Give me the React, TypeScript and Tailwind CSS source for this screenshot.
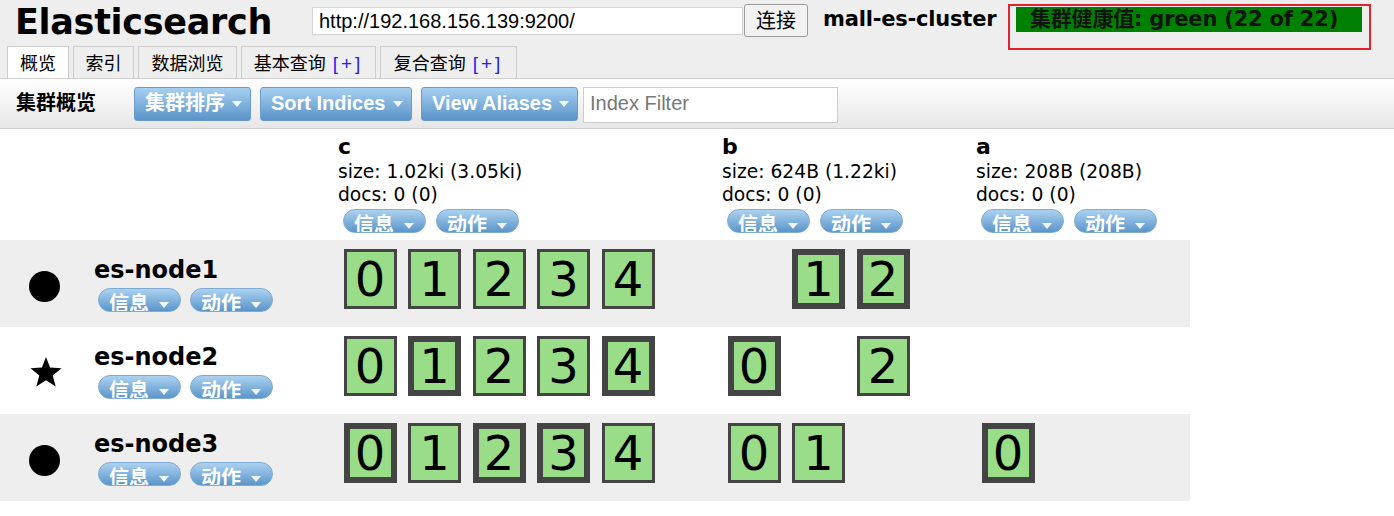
import React from "react";

const VERDANA = "font-['DejaVu_Sans','Noto_Sans_CJK_SC',sans-serif]";
const ARIAL = "font-['Liberation_Sans','Noto_Sans_CJK_SC',sans-serif]";

type Slot = null | { n: number; p: boolean };

const nodes: { name: string; master: boolean; c: Slot[]; b: Slot[]; a: Slot[] }[] = [
  {
    name: "es-node1",
    master: false,
    c: [
      { n: 0, p: false },
      { n: 1, p: false },
      { n: 2, p: false },
      { n: 3, p: false },
      { n: 4, p: false },
    ],
    b: [null, { n: 1, p: true }, { n: 2, p: true }],
    a: [],
  },
  {
    name: "es-node2",
    master: true,
    c: [
      { n: 0, p: false },
      { n: 1, p: true },
      { n: 2, p: false },
      { n: 3, p: false },
      { n: 4, p: true },
    ],
    b: [{ n: 0, p: true }, null, { n: 2, p: false }],
    a: [],
  },
  {
    name: "es-node3",
    master: false,
    c: [
      { n: 0, p: true },
      { n: 1, p: false },
      { n: 2, p: true },
      { n: 3, p: true },
      { n: 4, p: false },
    ],
    b: [{ n: 0, p: false }, { n: 1, p: false }],
    a: [{ n: 0, p: true }],
  },
];

const indices = [
  { name: "c", size: "size: 1.02ki (3.05ki)", docs: "docs: 0 (0)" },
  { name: "b", size: "size: 624B (1.22ki)", docs: "docs: 0 (0)" },
  { name: "a", size: "size: 208B (208B)", docs: "docs: 0 (0)" },
];

function Caret() {
  return (
    <svg width="10" height="6" viewBox="0 0 10 6" className="shrink-0">
      <path d="M0 0h10L5 6z" fill="#fff" fillOpacity="0.9" />
    </svg>
  );
}

function ToolButton({ label, width }: { label: string; width: string }) {
  return (
    <div
      className={`${width} h-[34px] flex items-center justify-between pl-[10px] pr-[8px] rounded-[3px] border border-[#6a9bcf] bg-linear-to-b from-[#a6d0f1] to-[#5a93c8] text-white font-bold text-[20px] ${ARIAL}`}
    >
      <span className="-mt-[2px]">{label}</span>
      <Caret />
    </div>
  );
}

function Pill({ label }: { label: string }) {
  return (
    <div className="w-[83px] h-[24px] rounded-full overflow-hidden border border-[#7eaad4] bg-linear-to-b from-[#acd2f1] to-[#5b95c9] flex items-start pl-[10px] pt-[5px]">
      <span className={`text-white font-bold text-[20px] leading-[20px] ${ARIAL}`}>{label}</span>
      <span className="ml-[10px] mt-[8px]">
        <Caret />
      </span>
    </div>
  );
}

function Shard({ s }: { s: Slot }) {
  return (
    <div className="w-[64.5px] shrink-0 pl-[5.5px]">
      {s && (
        <div
          className={`w-[53px] h-[60px] flex items-center justify-center bg-[#99dd88] border-[#444444] ${
            s.p ? "border-[6px]" : "border-[3px]"
          } text-[48px] leading-none text-black font-['DejaVu_Sans',sans-serif]`}
        >
          {s.n}
        </div>
      )}
    </div>
  );
}

function Star() {
  return (
    <svg width="34" height="32" viewBox="0 0 34 32">
      <path
        d="M17 1l4.1 10.6 11.4.6-8.8 7.2 3 11L17 24.2 7.3 30.4l3-11-8.8-7.2 11.4-.6z"
        fill="#000"
      />
    </svg>
  );
}

export default function App() {
  return (
    <div className={`w-[1394px] h-[516px] overflow-hidden bg-white text-black ${VERDANA}`}>
      {/* header */}
      <div className="bg-[#eeeeee] h-[78px]">
        <div className="flex items-start h-[46px]">
          <div className="w-[312px] pl-[15px] pt-[2px] text-[35px] leading-[40px] font-bold tracking-[-0.3px]">
            Elasticsearch
          </div>
          <div
            className={`mt-[7px] w-[431px] h-[28px] bg-white border border-[#d4d4d4] pl-[6px] text-[20px] leading-[26px] ${ARIAL}`}
          >
            http://192.168.156.139:9200/
          </div>
          <div
            className={`mt-[4px] ml-[1px] w-[64px] h-[33px] rounded-[3px] border border-[#9a9a9a] bg-[#f2f2f2] flex items-center justify-center text-[20px] ${ARIAL}`}
          >
            连接
          </div>
          <div className="ml-[15px] w-[185px] pt-[6px] text-[21px] leading-[26px] font-bold tracking-[-0.2px]">
            mall-es-cluster
          </div>
          <div className="mt-[4px] w-[363px] h-[46px] border-2 border-[#e3222e] pt-[1px] pl-[6px]">
            <div className="w-[346px] h-[25px] bg-[#008000] pl-[14px] text-[21px] leading-[25px] font-bold text-[#101410] tracking-[-0.2px]">
              集群健康值: green (22 of 22)
            </div>
          </div>
        </div>
        <div className={`flex items-end gap-[4px] pl-[7px] h-[32px] text-[18px] ${ARIAL}`}>
          <div className="w-[62px] h-[32px] bg-white border border-b-0 border-[#cccccc] flex items-center justify-center pt-[4px]">
            概览
          </div>
          <div className="w-[61px] h-[32px] border border-b-0 border-[#cccccc] flex items-center justify-center pt-[4px]">
            索引
          </div>
          <div className="w-[99px] h-[32px] border border-b-0 border-[#cccccc] flex items-center justify-center pt-[4px]">
            数据浏览
          </div>
          <div className="w-[135px] h-[32px] border border-b-0 border-[#cccccc] flex items-center justify-center pt-[4px]">
            基本查询&nbsp;<span className="text-[#2222f0] text-[19px] tracking-[3px] ml-[2px]">[+]</span>
          </div>
          <div className="w-[137px] h-[32px] border border-b-0 border-[#cccccc] flex items-center justify-center pt-[4px]">
            复合查询&nbsp;<span className="text-[#2222f0] text-[19px] tracking-[3px] ml-[2px]">[+]</span>
          </div>
        </div>
      </div>

      {/* toolbar */}
      <div className="h-[51px] border-y border-[#cfcfcf] bg-linear-to-b from-[#ffffff] to-[#e7e7e7] flex items-center">
        <div className="w-[134px] pl-[16px] text-[20px] font-bold -mt-[2px]">集群概览</div>
        <ToolButton label="集群排序" width="w-[117px]" />
        <div className="w-[9px]" />
        <ToolButton label="Sort Indices" width="w-[152px]" />
        <div className="w-[9px]" />
        <ToolButton label="View Aliases" width="w-[157px]" />
        <div
          className={`ml-[5px] mt-[3px] w-[255px] h-[36px] bg-white border border-[#cccccc] pl-[6px] text-[20px] leading-[30px] text-[#777777] ${ARIAL}`}
        >
          Index Filter
        </div>
      </div>

      {/* cluster overview table */}
      <div className="w-[1190px]">
        <div className="grid grid-cols-[338px_384px_254px_214px] h-[111px]">
          <div />
          {indices.map((ix) => (
            <div key={ix.name} className="pt-[5px]">
              <div className="text-[22px] leading-[26px] font-bold">{ix.name}</div>
              <div className="text-[18.7px] leading-[23px]">{ix.size}</div>
              <div className="text-[18.7px] leading-[23px]">{ix.docs}</div>
              <div className="flex gap-[10px] pl-[5px] mt-[3px]">
                <Pill label="信息" />
                <Pill label="动作" />
              </div>
            </div>
          ))}
        </div>

        {nodes.map((node, i) => (
          <div
            key={node.name}
            className={`grid grid-cols-[94px_244px_384px_254px_214px] h-[87px] ${
              i % 2 === 0 ? "bg-[#eeeeee]" : "bg-white"
            }`}
          >
            <div className="pl-[29px] pt-[31px]">
              {node.master ? (
                <div className="-mt-[2px]">
                  <Star />
                </div>
              ) : (
                <div className="w-[31px] h-[31px] rounded-full bg-black" />
              )}
            </div>
            <div className="pt-[16px]">
              <div className="text-[24px] leading-[28px] font-bold">{node.name}</div>
              <div className="flex gap-[9px] pl-[4px] mt-[4px]">
                <Pill label="信息" />
                <Pill label="动作" />
              </div>
            </div>
            {[node.c, node.b, node.a].map((slots, k) => (
              <div key={k} className="flex pt-[9px]">
                {slots.map((s, j) => (
                  <Shard key={j} s={s} />
                ))}
              </div>
            ))}
          </div>
        ))}
      </div>
    </div>
  );
}
